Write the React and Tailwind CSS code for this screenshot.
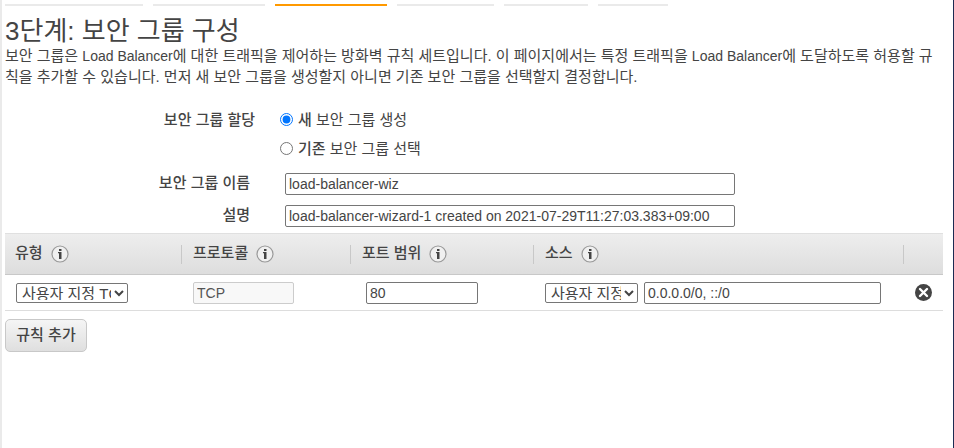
import React from 'react'

const STEPS = [
  { id: 1, width: 'w-[138px]' },
  { id: 2, width: 'w-28' },
  { id: 3, width: 'w-28', active: true },
  { id: 4, width: 'w-[97px]' },
  { id: 5, width: 'w-[84px]' },
  { id: 6, width: 'w-[70px]' },
]

const inputClass =
  'h-[22px] rounded-xs border border-[#767676] bg-white px-[3px] text-sm text-[#444]'

const selectClass =
  'h-5 rounded-xs border border-[#767676] bg-white pb-0.5 pl-px text-[15px] leading-4 text-[#444]'

const InfoIcon = () => (
  <svg className="h-[18px] w-[18px] shrink-0" viewBox="0 0 18 18" fill="none">
    <circle cx="9" cy="9" r="8" fill="#f0f0f0" stroke="#999" strokeWidth="1.2" />
    <rect x="8" y="4" width="2.5" height="2" fill="#444" />
    <path d="M7 7h3.5v7H8V8.2H7z" fill="#444" />
  </svg>
)

const RemoveIcon = () => (
  <svg className="h-[17px] w-[17px]" viewBox="0 0 17 17" fill="none">
    <circle cx="8.5" cy="8.5" r="8.5" fill="#444" />
    <path d="M5 5l7 7M12 5l-7 7" stroke="#fff" strokeWidth="2.4" strokeLinecap="round" />
  </svg>
)

const HeaderCell = ({ title, first = false }) => (
  <th scope="col" className="p-0 text-left font-medium">
    <div
      className={`flex h-[19px] items-center gap-2 ${first ? 'pl-[10px]' : 'border-l border-[#c8c8c8] pl-[11px]'}`}
    >
      <span className="self-start leading-4">{title}</span>
      <button type="button" aria-label={`${title} 정보`}>
        <InfoIcon />
      </button>
    </div>
  </th>
)

const App = () => {
  return (
    <div className="min-h-screen border-l-2 border-r border-l-[#eaeaea] border-r-[#1c2b52] bg-white pl-[3px] pr-[10px] pt-1 font-['Liberation_Sans','Noto_Sans_CJK_KR',sans-serif] text-[15px] leading-[21px] text-[#444]">
      {/* Step indicator */}
      <div className="flex gap-[10px]">
        {STEPS.map((step) => (
          <span
            key={step.id}
            className={`h-0.5 ${step.width} ${step.active ? 'bg-[#ff9900]' : 'bg-[#eaeaea]'}`}
          />
        ))}
      </div>

      <h1 className="mt-3 text-[26px] leading-[27px]">3단계: 보안 그룹 구성</h1>
      <p>
        보안 그룹은 <span className="text-sm leading-none">Load Balancer</span>에 대한 트래픽을 제어하는 방화벽 규칙
        세트입니다. 이 페이지에서는 특정 트래픽을 <span className="text-sm leading-none">Load Balancer</span>에
        도달하도록 허용할 규칙을 추가할 수 있습니다. 먼저 새 보안 그룹을 생성할지 아니면 기존 보안 그룹을 선택할지
        결정합니다.
      </p>

      {/* Security group form */}
      <div role="radiogroup" aria-labelledby="assign" className="mt-[22px] flex">
        <div id="assign" className="w-[250px] text-right font-medium">
          보안 그룹 할당
        </div>
        <div className="ml-[25px] flex flex-col gap-2">
          <label className="flex items-center gap-[5px]">
            <input type="radio" name="group" className="h-[13px] w-[13px]" defaultChecked />
            <span>
              <b className="font-medium">새</b> 보안 그룹 생성
            </span>
          </label>
          <label className="flex items-center gap-[5px]">
            <input type="radio" name="group" className="h-[13px] w-[13px]" />
            <span>
              <b className="font-medium">기존</b> 보안 그룹 선택
            </span>
          </label>
        </div>
      </div>
      <div className="mt-[14px] flex">
        <label htmlFor="name" className="w-[245px] text-right font-medium leading-5">
          보안 그룹 이름
        </label>
        <input id="name" className={`ml-[35px] w-[450px] ${inputClass}`} defaultValue="load-balancer-wiz" />
      </div>
      <div className="mt-[10px] flex">
        <label htmlFor="description" className="w-[245px] text-right font-medium leading-5">
          설명
        </label>
        <input
          id="description"
          className={`ml-[35px] w-[450px] ${inputClass}`}
          defaultValue="load-balancer-wizard-1 created on 2021-07-29T11:27:03.383+09:00"
        />
      </div>

      {/* Rules */}
      <table className="mt-[6px] w-full table-fixed border-separate border-spacing-0">
        <colgroup>
          <col className="w-[176px]" />
          <col className="w-[169px]" />
          <col className="w-[183px]" />
          <col />
          <col className="w-[40px]" />
        </colgroup>
        <thead>
          <tr className="h-[42px] bg-linear-to-b from-[#eeeeee] to-[#dddddd] *:border-y *:border-t-[#e0e0e0] *:border-b-[#c8c8c8]">
            <HeaderCell title="유형" first />
            <HeaderCell title="프로토콜" />
            <HeaderCell title="포트 범위" />
            <HeaderCell title="소스" />
            <td className="p-0">
              <div className="h-[19px] border-l border-[#c8c8c8]" />
            </td>
          </tr>
        </thead>
        <tbody>
          <tr className="h-9 *:border-b *:border-[#dddddd]">
            <td className="p-0 pl-[11px]">
              <select aria-label="유형" className={`block w-28 ${selectClass}`}>
                <option>사용자 지정 TCP 규칙</option>
              </select>
            </td>
            <td className="p-0 pl-3">
              <input
                aria-label="프로토콜"
                disabled
                defaultValue="TCP"
                className="block h-[22px] w-[101px] rounded-xs border border-[#cccccc] bg-[#f8f8f8] px-[3px] text-sm text-[#545454]"
              />
            </td>
            <td className="p-0 pl-4">
              <input aria-label="포트 범위" defaultValue="80" className={`block w-28 ${inputClass}`} />
            </td>
            <td className="p-0 pl-3">
              <div className="flex items-center gap-[6px]">
                <select aria-label="소스 유형" className={`w-[93px] shrink-0 ${selectClass}`}>
                  <option>사용자 지정</option>
                </select>
                <input aria-label="소스" defaultValue="0.0.0.0/0, ::/0" className={`w-[237px] ${inputClass}`} />
              </div>
            </td>
            <td className="p-0 pl-3">
              <button type="button" aria-label="규칙 삭제" className="block">
                <RemoveIcon />
              </button>
            </td>
          </tr>
        </tbody>
      </table>

      <button
        type="button"
        className="mt-2 h-[33px] min-w-[82px] rounded-[5px] border border-[#c8c8c8] bg-linear-to-b from-[#f5f5f5] to-[#dfdfdf] px-[10px] pb-0.5 font-medium"
      >
        규칙 추가
      </button>
    </div>
  )
}

export default App
